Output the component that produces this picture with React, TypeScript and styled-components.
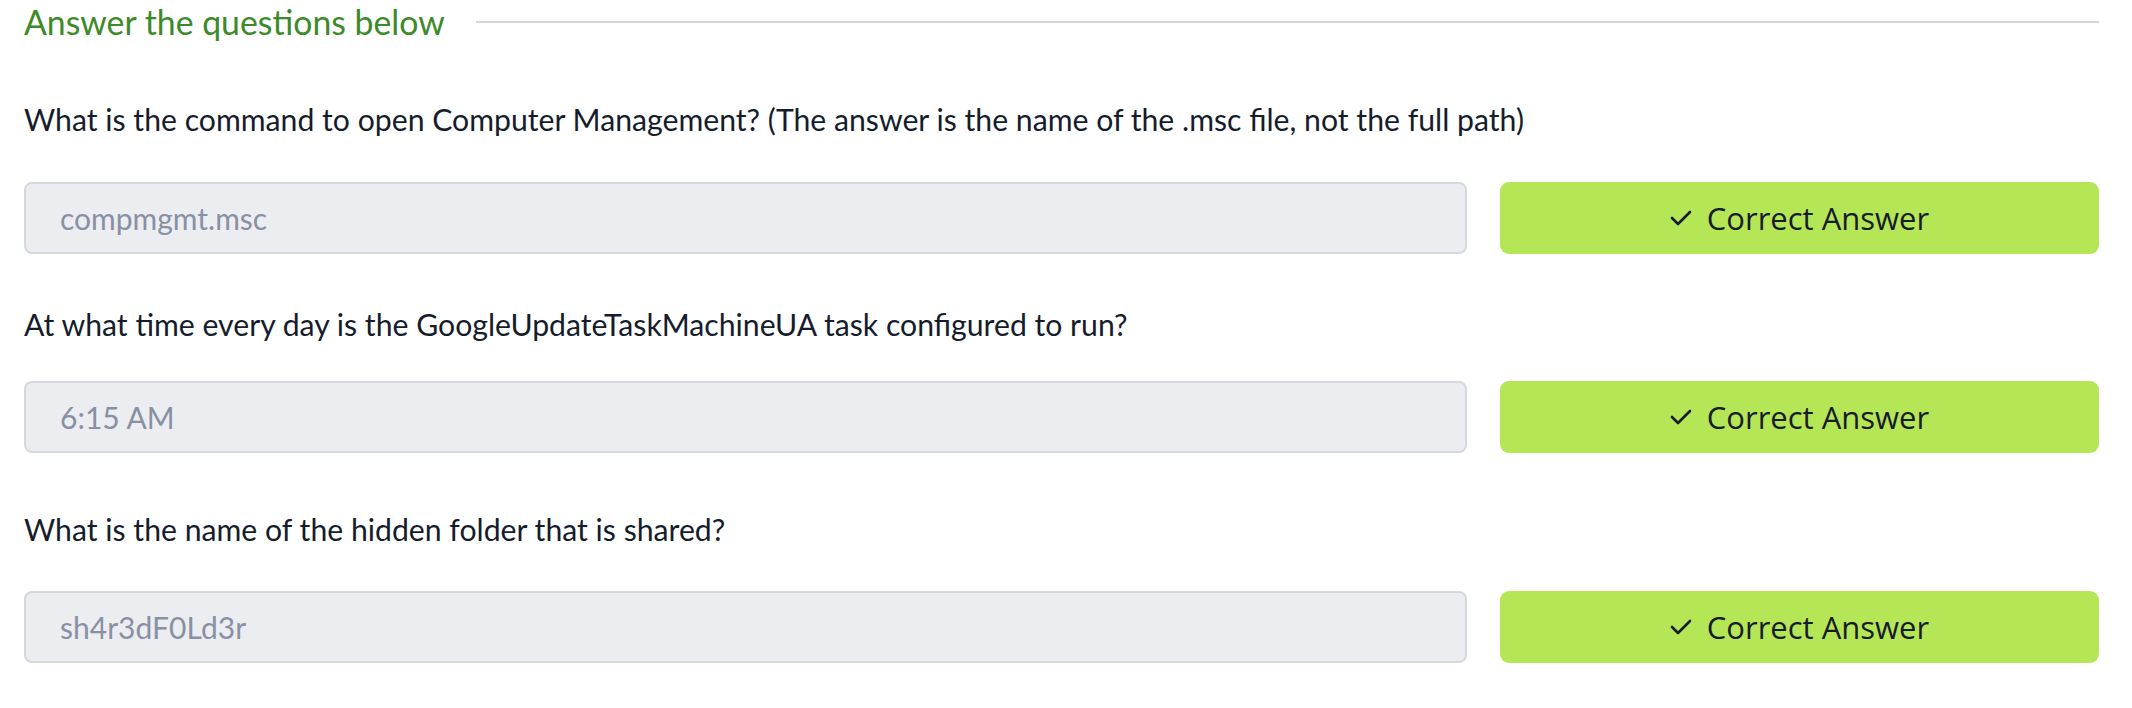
import React from "react";
import styled, { createGlobalStyle } from "styled-components";

const GlobalStyle = createGlobalStyle`
  html, body {
    margin: 0;
    padding: 0;
    background: #ffffff;
  }
  body {
    font-family: Lato, "Noto Sans", sans-serif;
  }
  * { box-sizing: border-box; }
`;

const Page = styled.div`
  padding: 0 33px 0 24px;
`;

const Header = styled.div`
  display: flex;
  align-items: center;
  height: 44px;
`;

const HeaderTitle = styled.h3`
  margin: 0;
  font-family: Lato, sans-serif;
  font-weight: 400;
  font-size: 33.8px;
  line-height: 44px;
  color: #3d8a28;
  white-space: nowrap;
`;

const HeaderRule = styled.div`
  flex: 1;
  height: 2px;
  margin-left: 31px;
  background: #d3d7dc;
`;

const Question = styled.div<{ $top: number }>`
  display: flex;
  flex-direction: column;
  margin-top: ${(p) => p.$top}px;
`;

const QuestionText = styled.p`
  margin: 0;
  font-family: Lato, sans-serif;
  font-size: 30.2px;
  line-height: 40px;
  color: #151c2b;
`;

const AnswerRow = styled.div<{ $gap: number }>`
  display: grid;
  grid-template-columns: 1fr 599px;
  column-gap: 33px;
  height: 72px;
  margin-top: ${(p) => p.$gap}px;
`;

const AnswerInput = styled.input`
  height: 100%;
  width: 100%;
  padding: 0 34px;
  border: 2px solid #d5d8df;
  border-radius: 8px;
  background: #ecedf1;
  color: #8990a4;
  font-family: Lato, sans-serif;
  font-size: 30px;
  outline: none;
`;

const CorrectButton = styled.button`
  display: flex;
  align-items: center;
  justify-content: center;
  gap: 15px;
  height: 100%;
  border: none;
  border-radius: 9px;
  background: #b5e655;
  color: #171b2c;
  font-family: "Open Sans", sans-serif;
  font-size: 31px;
  cursor: pointer;
`;

const CheckIcon = () => (
  <svg width="22" height="18" viewBox="0 0 22 18" fill="none">
    <polyline
      points="2,9 8,15 20,3"
      stroke="#171b2c"
      strokeWidth="2.6"
      strokeLinecap="round"
      strokeLinejoin="round"
    />
  </svg>
);

const questions = [
  {
    text:
      "What is the command to open Computer Management? (The answer is the name of the .msc file, not the full path)",
    answer: "compmgmt.msc",
    top: 55,
    gap: 43,
  },
  {
    text: "At what time every day is the GoogleUpdateTaskMachineUA task configured to run?",
    answer: "6:15 AM",
    top: 50,
    gap: 37,
  },
  {
    text: "What is the name of the hidden folder that is shared?",
    answer: "sh4r3dF0Ld3r",
    top: 56,
    gap: 42,
  },
];

export default function App() {
  return (
    <>
      <GlobalStyle />
      <Page>
        <Header>
          <HeaderTitle>Answer the questions below</HeaderTitle>
          <HeaderRule />
        </Header>
        {questions.map((q, i) => (
          <Question key={i} $top={q.top}>
            <QuestionText>{q.text}</QuestionText>
            <AnswerRow $gap={q.gap}>
              <AnswerInput readOnly value={q.answer} />
              <CorrectButton type="button">
                <CheckIcon />
                Correct Answer
              </CorrectButton>
            </AnswerRow>
          </Question>
        ))}
      </Page>
    </>
  );
}
